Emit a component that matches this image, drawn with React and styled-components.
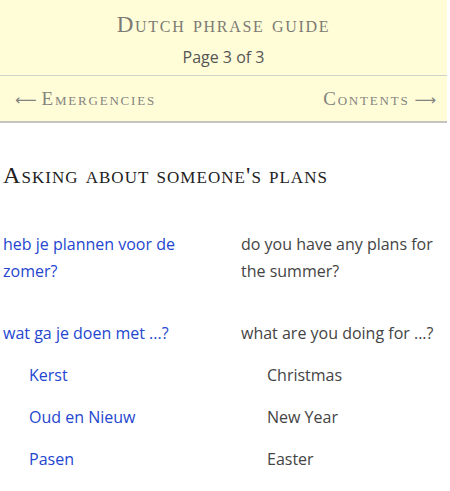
import styled, { createGlobalStyle } from "styled-components"

const GlobalStyle = createGlobalStyle`
  body {
    margin: 0;
    background: #fff;
    font-family: "Open Sans", "Liberation Sans", sans-serif;
  }
`

const Page = styled.div`
  width: 447px;
`

const Header = styled.header`
  background: #fffdd8;
  border-bottom: 2px solid #c4c4c0;
`

const TitleBlock = styled.div`
  padding: 10px 0 7px;
  text-align: center;
  border-bottom: 1px solid #d2d2cc;
`

const Title = styled.h1`
  margin: 0;
  font-family: "Liberation Serif", serif;
  font-variant: small-caps;
  font-weight: normal;
  font-size: 23px;
  line-height: 30px;
  letter-spacing: 1.7px;
  color: #7c7a74;
`

const PageNo = styled.div`
  font-size: 16px;
  line-height: 22px;
  margin-top: 6px;
  color: #555;
`

const Nav = styled.nav`
  display: flex;
  justify-content: space-between;
  align-items: center;
  height: 44px;
  padding: 1px 11px 0 15px;
`

const NavLink = styled.a`
  font-family: "Liberation Serif", serif;
  font-variant: small-caps;
  font-size: 19px;
  letter-spacing: 1.8px;
  color: #858380;
  text-decoration: none;
`

const Arrow = styled.span`
  font-family: "DejaVu Sans", sans-serif;
  font-size: 15px;
  letter-spacing: 0;
  margin: ${p => (p.$right ? "0 0 0 5px" : "0 5px 0 0")};
`

const Content = styled.main`
  padding: 37px 0 0 3px;
`

const Heading = styled.h2`
  margin: 0 0 41px;
  font-family: "Liberation Serif", serif;
  font-variant: small-caps;
  font-weight: normal;
  font-size: 24px;
  line-height: 30px;
  letter-spacing: 1.05px;
  color: #222;
`

const Row = styled.div`
  display: grid;
  grid-template-columns: 238px 1fr;
  padding-left: ${p => (p.$sub ? "26px" : "0")};
  margin-bottom: ${p => p.$gap}px;
  font-size: 16px;
  line-height: 27px;
`

const Dutch = styled.div`
  color: #2446cf;
  padding-right: 12px;
`

const English = styled.div`
  color: #444;
`

const phrases = [
  { nl: "heb je plannen voor de zomer?", en: "do you have any plans for the summer?", gap: 35 },
  { nl: "wat ga je doen met ...?", en: "what are you doing for ...?", gap: 15 },
  { nl: "Kerst", en: "Christmas", sub: true, gap: 15 },
  { nl: "Oud en Nieuw", en: "New Year", sub: true, gap: 15 },
  { nl: "Pasen", en: "Easter", sub: true, gap: 15 },
]

export default function App() {
  return (
    <>
      <GlobalStyle />
      <Page>
        <Header>
          <TitleBlock>
            <Title>Dutch phrase guide</Title>
            <PageNo>Page 3 of 3</PageNo>
          </TitleBlock>
          <Nav>
            <NavLink href="#"><Arrow>⟵</Arrow>Emergencies</NavLink>
            <NavLink href="#">Contents<Arrow $right>⟶</Arrow></NavLink>
          </Nav>
        </Header>
        <Content>
          <Heading>Asking about someone's plans</Heading>
          {phrases.map(p => (
            <Row key={p.nl} $sub={p.sub} $gap={p.gap}>
              <Dutch>{p.nl}</Dutch>
              <English>{p.en}</English>
            </Row>
          ))}
        </Content>
      </Page>
    </>
  )
}
